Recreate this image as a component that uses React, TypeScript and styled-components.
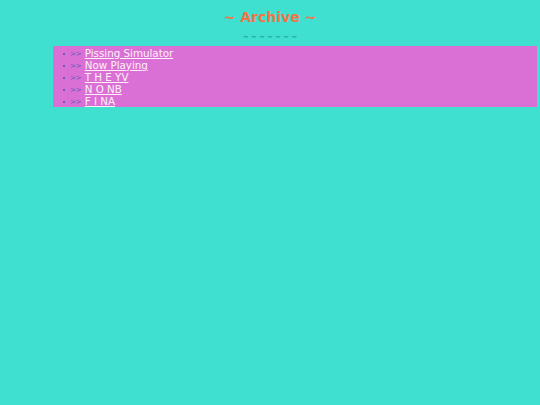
import React from "react";
import styled, { createGlobalStyle } from "styled-components";

const Global = createGlobalStyle`
  html, body { margin: 0; padding: 0; background: #40e0d0; }
  body { font-family: "DejaVu Sans", Verdana, sans-serif; }
`;

const Page = styled.div`
  padding: 8px 3px 0 53px;
`;

const Title = styled.h1`
  margin: 0 0 0 -53px;
  padding-left: 3px;
  text-align: center;
  font-size: 14px;
  line-height: 18px;
  font-weight: bold;
  color: #f07448;
`;

const Squiggle = styled.div`
  margin: 7px 0 0 -53px;
  padding-left: 5px;
  text-align: center;
  font-size: 7px;
  line-height: 8px;
  font-weight: bold;
  letter-spacing: 2.2px;
  color: #1d8f84;
`;

const List = styled.ul`
  margin: 5px 0 0 0;
  padding: 1px 0 0 10px;
  background: #da70d6;
  list-style: none;
  color: #5a4fb0;
  font-size: 10px;
  line-height: 12px;
`;

const Item = styled.li`
  display: flex;
  align-items: center;
  height: 12px;
  font-size: 10.3px;
  &::before {
    content: "";
    width: 2px;
    height: 2px;
    border-radius: 50%;
    background: #4a55a8;
    margin-right: 5px;
    margin-top: 2px;
  }
`;

const Arrow = styled.span`
  font-size: 7px;
  line-height: 12px;
  color: #5a58c0;
  margin-right: 3px;
  margin-top: 2px;
`;

const Link = styled.a`
  color: #fff0f5;
  line-height: 12px;
  text-decoration: underline;
`;

const items = ["Pissing Simulator", "Now Playing", "T H E YV", "N O NB", "F I NA"];

export default function App() {
  return (
    <>
      <Global />
      <Page>
        <Title>~ Archive ~</Title>
        <Squiggle>~~~~~~~</Squiggle>
        <List>
          {items.map((t) => (
            <Item key={t}>
              <Arrow>&gt;&gt;</Arrow>
              <Link href="#">{t}</Link>
            </Item>
          ))}
        </List>
      </Page>
    </>
  );
}
